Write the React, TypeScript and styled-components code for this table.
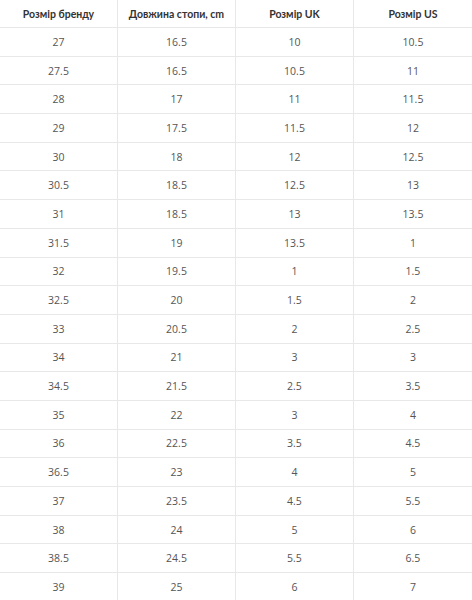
import React from "react";
import styled, { createGlobalStyle } from "styled-components";

const Global = createGlobalStyle`
  html, body { margin: 0; padding: 0; background: #ffffff; }
  body { font-family: "Open Sans", "Liberation Sans", sans-serif; }
`;

const Table = styled.div`
  display: grid;
  grid-template-columns: repeat(4, 1fr);
  width: 472px;
`;

const Cell = styled.div<{ $head?: boolean; $last?: boolean }>`
  box-sizing: border-box;
  height: ${(p) => (p.$head ? "28px" : "28.7px")};
  display: flex;
  align-items: center;
  justify-content: center;
  border-bottom: 1px solid #e8e8e8;
  border-right: ${(p) => (p.$last ? "none" : "1px solid #e8e8e8")};
  font-family: ${(p) =>
    p.$head ? '"Lato", "Open Sans", sans-serif' : '"Open Sans", sans-serif'};
  font-size: ${(p) => (p.$head ? "10.5px" : "10.5px")};
  font-weight: ${(p) => (p.$head ? 700 : 400)};
  color: ${(p) => (p.$head ? "#333333" : "#555555")};
  white-space: nowrap;
`;

const headers = ["Розмір бренду", "Довжина стопи, cm", "Розмір UK", "Розмір US"];

const rows: string[][] = [
  ["27", "16.5", "10", "10.5"],
  ["27.5", "16.5", "10.5", "11"],
  ["28", "17", "11", "11.5"],
  ["29", "17.5", "11.5", "12"],
  ["30", "18", "12", "12.5"],
  ["30.5", "18.5", "12.5", "13"],
  ["31", "18.5", "13", "13.5"],
  ["31.5", "19", "13.5", "1"],
  ["32", "19.5", "1", "1.5"],
  ["32.5", "20", "1.5", "2"],
  ["33", "20.5", "2", "2.5"],
  ["34", "21", "3", "3"],
  ["34.5", "21.5", "2.5", "3.5"],
  ["35", "22", "3", "4"],
  ["36", "22.5", "3.5", "4.5"],
  ["36.5", "23", "4", "5"],
  ["37", "23.5", "4.5", "5.5"],
  ["38", "24", "5", "6"],
  ["38.5", "24.5", "5.5", "6.5"],
  ["39", "25", "6", "7"],
];

export default function App() {
  return (
    <>
      <Global />
      <Table>
        {headers.map((h, i) => (
          <Cell key={"h" + i} $head $last={i === 3}>
            {h}
          </Cell>
        ))}
        {rows.map((r, ri) =>
          r.map((v, ci) => (
            <Cell key={ri + "-" + ci} $last={ci === 3}>
              {v}
            </Cell>
          ))
        )}
      </Table>
    </>
  );
}
